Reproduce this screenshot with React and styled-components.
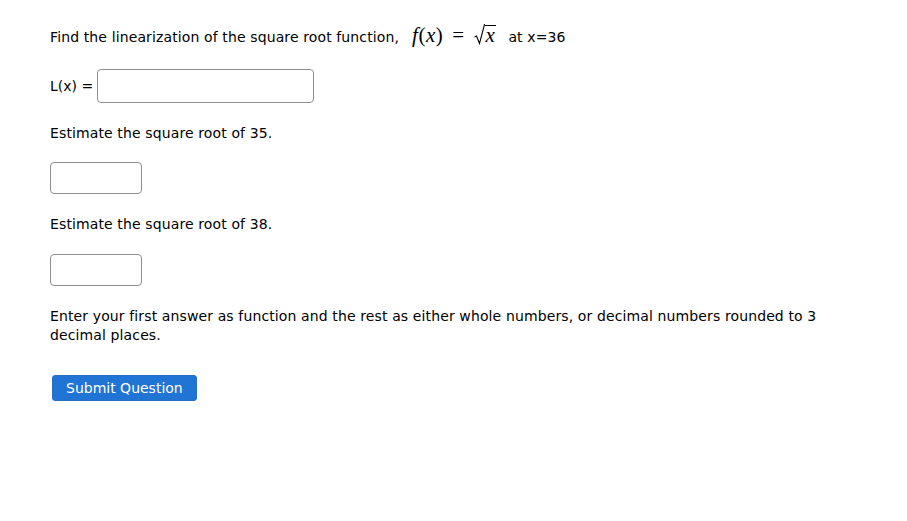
import React from 'react';
import styled, { createGlobalStyle } from 'styled-components';

const GlobalStyle = createGlobalStyle`
  html, body {
    margin: 0;
    padding: 0;
    background: #fff;
  }
  body {
    font-family: "DejaVu Sans", Tahoma, sans-serif;
    color: #000;
  }
`;

const Page = styled.div`
  padding: 24px 50px 0 50px;
  width: 800px;
`;

const Prompt = styled.p`
  margin: 0;
  font-size: 14px;
  line-height: 19px;
  letter-spacing: 0.12px;
  max-width: 795px;
`;

const MathSpan = styled.span`
  display: inline-block;
  font-family: "Liberation Serif", "Times New Roman", serif;
  font-size: 21px;
  line-height: 19px;
  letter-spacing: 0.5px;
  margin: 0 12px 0 13px;
`;

const Ital = styled.i`
  font-style: italic;
`;

const Eq = styled.span`
  margin: 0 9px;
`;

const Radical = styled.span`
  display: inline-flex;
  align-items: flex-end;
  vertical-align: -3px;
`;

const RadSign = styled.svg`
  width: 11px;
  height: 21px;
`;

const Radicand = styled.span`
  border-top: 1px solid #000;
  line-height: 19px;
  padding: 0 1px;
`;

const AnswerRow = styled.div`
  display: flex;
  align-items: center;
  gap: 4px;
  margin-top: 22px;
`;

const Label = styled.span`
  font-size: 14px;
`;

const Field = styled.input`
  box-sizing: border-box;
  display: block;
  width: ${p => p.$w}px;
  height: ${p => p.$h}px;
  border: 1px solid #8f8f8f;
  border-radius: 4px;
  background: #fff;
  margin: 0;
  padding: 0 6px;
  outline: none;
`;

const Block = styled.div`
  margin-top: ${p => p.$mt}px;
`;

const SubmitButton = styled.button`
  display: block;
  margin-top: 30px;
  margin-left: 2px;
  background: #1f74d4;
  color: #fff;
  border: 1px solid #2a6fc0;
  border-radius: 3px;
  font-family: "DejaVu Sans", Tahoma, sans-serif;
  font-size: 14px;
  height: 26px;
  padding: 0 13px;
  cursor: pointer;
`;

export default function App() {
  return (
    <>
      <GlobalStyle />
      <Page>
        <Prompt>
          Find the linearization of the square root function,
          <MathSpan>
            <Ital>f</Ital>(<Ital>x</Ital>)<Eq>=</Eq>
            <Radical>
              <RadSign viewBox="0 0 11 21">
                <path d="M0.5 13 L2.5 12 L5.5 19.5 L10.5 0.5 L11 0.5" fill="none" stroke="#000" strokeWidth="1.1" />
              </RadSign>
              <Radicand><Ital>x</Ital></Radicand>
            </Radical>
          </MathSpan>
          at x=36
        </Prompt>
        <AnswerRow>
          <Label>L(x) =</Label>
          <Field $w={217} $h={34} />
        </AnswerRow>
        <Block $mt={21}>
          <Prompt>Estimate the square root of 35.</Prompt>
        </Block>
        <Block $mt={19}>
          <Field $w={92} $h={32} />
        </Block>
        <Block $mt={21}>
          <Prompt>Estimate the square root of 38.</Prompt>
        </Block>
        <Block $mt={20}>
          <Field $w={92} $h={32} />
        </Block>
        <Block $mt={21}>
          <Prompt>
            Enter your first answer as function and the rest as either whole numbers, or decimal numbers rounded to 3 decimal places.
          </Prompt>
        </Block>
        <SubmitButton>Submit Question</SubmitButton>
      </Page>
    </>
  );
}
